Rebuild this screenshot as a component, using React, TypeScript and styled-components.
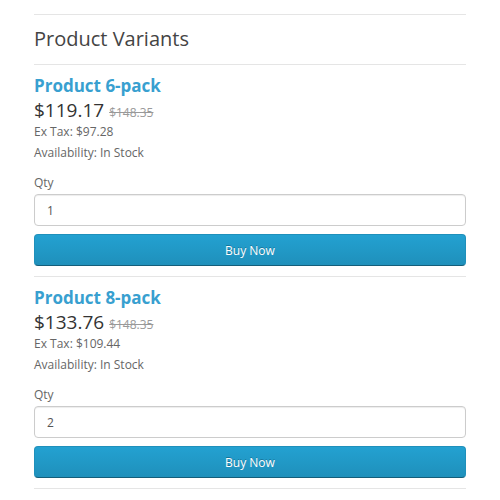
import styled, { createGlobalStyle } from "styled-components";

const GlobalStyle = createGlobalStyle`
  body {
    margin: 0;
    background: #fff;
    font-family: "Open Sans", "Liberation Sans", sans-serif;
    font-size: 12px;
    color: #666;
  }
`;

const variants = [
  { name: "Product 6-pack", price: "$119.17", old: "$148.35", exTax: "$97.28", qty: "1" },
  { name: "Product 8-pack", price: "$133.76", old: "$148.35", exTax: "$109.44", qty: "2" },
];

const App = () => {
  return (
    <>
      <GlobalStyle />
      <Page>
        <Rule />
        <Title>Product Variants</Title>
        <Rule />
        {variants.map((v) => (
          <Variant key={v.name}>
            <Name>{v.name}</Name>
            <Price>
              {v.price} <Old>{v.old}</Old>
            </Price>
            <Meta>Ex Tax: {v.exTax}</Meta>
            <Meta>Availability: In Stock</Meta>
            <Label>Qty</Label>
            <QtyInput defaultValue={v.qty} />
            <BuyButton>Buy Now</BuyButton>
            <Rule />
          </Variant>
        ))}
      </Page>
    </>
  );
};

export default App;

const Page = styled.div`
  padding: 14px 34px 0;
  display: flex;
  flex-direction: column;
`;

const Rule = styled.hr`
  border: none;
  border-top: 1px solid #e5e5e5;
  margin: 0;
  width: 100%;
`;

const Title = styled.h1`
  font-size: 20px;
  font-weight: 400;
  color: #444;
  margin: 0;
  padding: 12px 0 13px;
  line-height: 24px;
`;

const Variant = styled.div`
  display: flex;
  flex-direction: column;
  padding-top: 10px;
`;

const Name = styled.h2`
  font-size: 17px;
  font-weight: 700;
  color: #38a0d0;
  margin: 0;
  line-height: 22px;
`;

const Price = styled.div`
  font-size: 19px;
  color: #333;
  line-height: 22px;
  height: 22px;
  margin-top: 2px;
`;

const Old = styled.span`
  font-size: 12px;
  line-height: 1;
  color: #999;
  text-decoration: line-through;
`;

const Meta = styled.div`
  font-size: 12px;
  color: #666;
  line-height: 21px;
`;

const Label = styled.label`
  font-size: 12px;
  color: #666;
  margin-top: 10px;
  line-height: 20px;
`;

const QtyInput = styled.input`
  height: 32px;
  box-sizing: border-box;
  margin-top: 1px;
  border: 1px solid #ccc;
  border-radius: 4px;
  padding: 0 12px;
  font-family: "Open Sans", "Liberation Sans", sans-serif;
  font-size: 12px;
  color: #555;
  box-shadow: inset 0 1px 1px rgba(0, 0, 0, 0.075);
`;

const BuyButton = styled.button`
  height: 32px;
  margin: 8px 0 10px;
  border: 1px solid #1f90bb;
  border-bottom-color: #145e7a;
  border-radius: 4px;
  background: linear-gradient(to bottom, #23a1d1, #1f90bb);
  color: #fff;
  font-family: "Open Sans", "Liberation Sans", sans-serif;
  font-size: 12px;
  text-shadow: 0 -1px 0 rgba(0, 0, 0, 0.25);
  cursor: pointer;
`;
